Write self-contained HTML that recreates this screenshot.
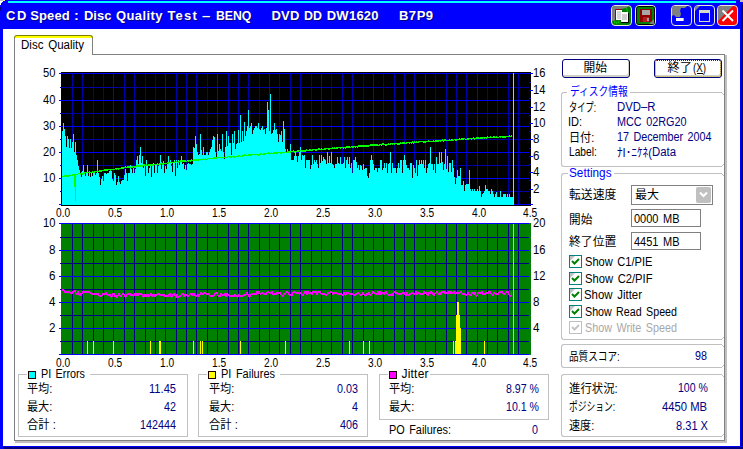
<!DOCTYPE html><html><head><meta charset="utf-8"><title>CD Speed : Disc Quality Test</title><style>
html,body{margin:0;padding:0;background:#fff}
body{width:743px;height:449px;position:relative;overflow:hidden;font-family:"Liberation Sans",sans-serif;font-size:12px}
svg{overflow:visible}
</style></head><body>
<svg style="position:absolute;left:0;top:0" width="743" height="449" shape-rendering="crispEdges"><rect x="61" y="72" width="470" height="134" fill="#000"/><rect x="72" y="73" width="1" height="132" fill="#0000a8"/><rect x="82" y="73" width="1" height="132" fill="#0000a8"/><rect x="93" y="73" width="1" height="132" fill="#0000a8"/><rect x="103" y="73" width="1" height="132" fill="#0000a8"/><rect x="113" y="73" width="1" height="132" fill="#0000ff"/><rect x="124" y="73" width="1" height="132" fill="#0000a8"/><rect x="134" y="73" width="1" height="132" fill="#0000a8"/><rect x="145" y="73" width="1" height="132" fill="#0000a8"/><rect x="155" y="73" width="1" height="132" fill="#0000a8"/><rect x="165" y="73" width="1" height="132" fill="#0000ff"/><rect x="176" y="73" width="1" height="132" fill="#0000a8"/><rect x="186" y="73" width="1" height="132" fill="#0000a8"/><rect x="196" y="73" width="1" height="132" fill="#0000a8"/><rect x="207" y="73" width="1" height="132" fill="#0000a8"/><rect x="217" y="73" width="1" height="132" fill="#0000ff"/><rect x="228" y="73" width="1" height="132" fill="#0000a8"/><rect x="238" y="73" width="1" height="132" fill="#0000a8"/><rect x="248" y="73" width="1" height="132" fill="#0000a8"/><rect x="259" y="73" width="1" height="132" fill="#0000a8"/><rect x="269" y="73" width="1" height="132" fill="#0000ff"/><rect x="279" y="73" width="1" height="132" fill="#0000a8"/><rect x="290" y="73" width="1" height="132" fill="#0000a8"/><rect x="300" y="73" width="1" height="132" fill="#0000a8"/><rect x="311" y="73" width="1" height="132" fill="#0000a8"/><rect x="321" y="73" width="1" height="132" fill="#0000ff"/><rect x="331" y="73" width="1" height="132" fill="#0000a8"/><rect x="342" y="73" width="1" height="132" fill="#0000a8"/><rect x="352" y="73" width="1" height="132" fill="#0000a8"/><rect x="363" y="73" width="1" height="132" fill="#0000a8"/><rect x="373" y="73" width="1" height="132" fill="#0000ff"/><rect x="383" y="73" width="1" height="132" fill="#0000a8"/><rect x="394" y="73" width="1" height="132" fill="#0000a8"/><rect x="404" y="73" width="1" height="132" fill="#0000a8"/><rect x="414" y="73" width="1" height="132" fill="#0000a8"/><rect x="425" y="73" width="1" height="132" fill="#0000ff"/><rect x="435" y="73" width="1" height="132" fill="#0000a8"/><rect x="446" y="73" width="1" height="132" fill="#0000a8"/><rect x="456" y="73" width="1" height="132" fill="#0000a8"/><rect x="466" y="73" width="1" height="132" fill="#0000a8"/><rect x="477" y="73" width="1" height="132" fill="#0000ff"/><rect x="487" y="73" width="1" height="132" fill="#0000a8"/><rect x="497" y="73" width="1" height="132" fill="#0000a8"/><rect x="508" y="73" width="1" height="132" fill="#0000a8"/><rect x="518" y="73" width="1" height="132" fill="#0000a8"/><rect x="59" y="204" width="470" height="1" fill="#0000ff"/><rect x="60" y="191" width="469" height="1" fill="#0000a8"/><rect x="59" y="178" width="470" height="1" fill="#0000ff"/><rect x="60" y="165" width="469" height="1" fill="#0000a8"/><rect x="59" y="152" width="470" height="1" fill="#0000ff"/><rect x="60" y="139" width="469" height="1" fill="#0000a8"/><rect x="59" y="126" width="470" height="1" fill="#0000ff"/><rect x="60" y="113" width="469" height="1" fill="#0000a8"/><rect x="59" y="100" width="470" height="1" fill="#0000ff"/><rect x="60" y="87" width="469" height="1" fill="#0000a8"/><rect x="59" y="73" width="470" height="1" fill="#0000ff"/><rect x="529" y="204" width="4" height="1" fill="#0000ff"/><rect x="529" y="197" width="2" height="1" fill="#0000ff"/><rect x="529" y="189" width="4" height="1" fill="#0000ff"/><rect x="529" y="180" width="2" height="1" fill="#0000ff"/><rect x="529" y="172" width="4" height="1" fill="#0000ff"/><rect x="529" y="164" width="2" height="1" fill="#0000ff"/><rect x="529" y="156" width="4" height="1" fill="#0000ff"/><rect x="529" y="148" width="2" height="1" fill="#0000ff"/><rect x="529" y="139" width="4" height="1" fill="#0000ff"/><rect x="529" y="131" width="2" height="1" fill="#0000ff"/><rect x="529" y="123" width="4" height="1" fill="#0000ff"/><rect x="529" y="115" width="2" height="1" fill="#0000ff"/><rect x="529" y="107" width="4" height="1" fill="#0000ff"/><rect x="529" y="98" width="2" height="1" fill="#0000ff"/><rect x="529" y="90" width="4" height="1" fill="#0000ff"/><rect x="529" y="82" width="2" height="1" fill="#0000ff"/><rect x="529" y="73" width="4" height="1" fill="#0000ff"/><path d="M62 205V131h1V123h1V129h1V136h1V147h1V136h1V139h1V148h1V139h1V148h1V142h1V134h1V152h1V142h1V155h1V160h1V166h1V170h1V173h1V177h1V171h1V165h1V173h1V176h1V173h1V165h1V176h1V173h1V177h1V173h1V176h1V173h1V172h1V175h1V173h1V160h1V173h1V177h1V185h1V179h1V176h1V181h1V173h1V173h1V174h1V173h1V173h1V171h1V169h1V171h1V179h1V181h1V173h1V175h1V185h1V182h1V176h1V182h1V184h1V181h1V180h1V180h1V175h1V169h1V173h1V181h1V173h1V173h1V165h1V169h1V173h1V168h1V173h1V169h1V160h1V156h1V164h1V155h1V147h1V163h1V156h1V168h1V164h1V176h1V160h1V166h1V173h1V168h1V166h1V177h1V166h1V163h1V173h1V164h1V164h1V173h1V166h1V164h1V155h1V169h1V164h1V161h1V173h1V166h1V169h1V164h1V156h1V163h1V160h1V166h1V172h1V162h1V160h1V176h1V160h1V168h1V160h1V165h1V160h1V156h1V164h1V163h1V169h1V165h1V170h1V164h1V163h1V164h1V164h1V165h1V164h1V147h1V148h1V136h1V144h1V152h1V155h1V154h1V134h1V150h1V155h1V147h1V155h1V155h1V152h1V152h1V155h1V152h1V149h1V147h1V140h1V136h1V137h1V152h1V159h1V134h1V151h1V144h1V149h1V151h1V134h1V152h1V159h1V147h1V131h1V146h1V136h1V143h1V143h1V155h1V134h1V143h1V131h1V149h1V144h1V143h1V130h1V143h1V115h1V142h1V131h1V141h1V122h1V136h1V131h1V126h1V110h1V128h1V126h1V123h1V134h1V130h1V128h1V126h1V126h1V128h1V123h1V129h1V130h1V128h1V126h1V130h1V129h1V134h1V128h1V102h1V110h1V131h1V94h1V134h1V133h1V130h1V123h1V130h1V129h1V134h1V142h1V134h1V135h1V131h1V142h1V121h1V129h1V149h1V152h1V149h1V152h1V151h1V144h1V160h1V160h1V160h1V156h1V152h1V156h1V162h1V156h1V152h1V147h1V160h1V155h1V156h1V155h1V168h1V160h1V160h1V160h1V160h1V169h1V165h1V155h1V164h1V160h1V162h1V160h1V164h1V168h1V155h1V163h1V155h1V161h1V157h1V159h1V160h1V164h1V152h1V163h1V156h1V163h1V152h1V164h1V165h1V168h1V164h1V164h1V157h1V163h1V164h1V157h1V164h1V164h1V163h1V157h1V168h1V160h1V157h1V164h1V157h1V168h1V163h1V173h1V160h1V160h1V157h1V162h1V168h1V165h1V170h1V165h1V166h1V170h1V164h1V169h1V168h1V168h1V176h1V178h1V173h1V160h1V155h1V160h1V164h1V170h1V168h1V168h1V172h1V168h1V168h1V160h1V160h1V170h1V168h1V163h1V168h1V163h1V173h1V164h1V163h1V152h1V173h1V163h1V168h1V168h1V168h1V173h1V168h1V163h1V168h1V160h1V160h1V173h1V160h1V155h1V160h1V165h1V168h1V168h1V170h1V163h1V163h1V178h1V165h1V168h1V173h1V160h1V176h1V165h1V160h1V164h1V160h1V164h1V160h1V168h1V160h1V173h1V168h1V164h1V163h1V147h1V164h1V164h1V170h1V164h1V173h1V157h1V164h1V164h1V152h1V163h1V152h1V162h1V170h1V164h1V149h1V169h1V156h1V172h1V163h1V163h1V172h1V160h1V168h1V177h1V184h1V178h1V170h1V176h1V176h1V168h1V185h1V185h1V181h1V191h1V185h1V184h1V184h1V184h1V170h1V189h1V191h1V189h1V191h1V189h1V191h1V191h1V189h1V191h1V186h1V191h1V197h1V194h1V193h1V191h1V185h1V189h1V189h1V191h1V191h1V194h1V189h1V191h1V194h1V197h1V194h1V192h1V197h1V197h1V197h1V191h1V197h1V197h1V194h1V194h1V194h1V197h1V194h1V197h1V194h1V197h1V197h1V197h1V205Z" fill="#00ffff"/><path d="M62 176h1v1h-1zM63 176h1v1h-1zM64 175h1v2h-1zM65 175h1v1h-1zM66 175h1v2h-1zM67 175h1v2h-1zM68 175h1v2h-1zM69 174h1v2h-1zM70 175h1v1h-1zM71 175h1v1h-1zM72 174h1v2h-1zM73 174h1v1h-1zM74 174h1v2h-1zM75 174h1v2h-1zM76 174h1v1h-1zM77 174h1v1h-1zM78 173h1v1h-1zM79 173h1v1h-1zM80 173h1v2h-1zM81 172h1v2h-1zM82 173h1v2h-1zM83 172h1v2h-1zM84 172h1v2h-1zM85 172h1v1h-1zM86 172h1v1h-1zM87 172h1v1h-1zM88 172h1v1h-1zM89 171h1v2h-1zM90 172h1v1h-1zM91 172h1v1h-1zM92 171h1v2h-1zM93 172h1v1h-1zM94 171h1v2h-1zM95 171h1v1h-1zM96 171h1v1h-1zM97 170h1v2h-1zM98 171h1v1h-1zM99 170h1v2h-1zM100 170h1v2h-1zM101 170h1v2h-1zM102 170h1v1h-1zM103 170h1v1h-1zM104 169h1v2h-1zM105 169h1v2h-1zM106 169h1v2h-1zM107 169h1v2h-1zM108 169h1v1h-1zM109 169h1v1h-1zM110 169h1v2h-1zM111 169h1v1h-1zM112 169h1v1h-1zM113 169h1v1h-1zM114 169h1v1h-1zM115 168h1v1h-1zM116 168h1v2h-1zM117 168h1v1h-1zM118 168h1v2h-1zM119 168h1v1h-1zM120 168h1v1h-1zM121 167h1v2h-1zM122 167h1v2h-1zM123 167h1v2h-1zM124 167h1v1h-1zM125 166h1v2h-1zM126 167h1v1h-1zM127 166h1v2h-1zM128 166h1v2h-1zM129 166h1v2h-1zM130 167h1v1h-1zM131 166h1v2h-1zM132 166h1v2h-1zM133 166h1v1h-1zM134 166h1v2h-1zM135 166h1v2h-1zM136 165h1v2h-1zM137 165h1v2h-1zM138 165h1v2h-1zM139 165h1v2h-1zM140 165h1v2h-1zM141 165h1v1h-1zM142 165h1v2h-1zM143 164h1v2h-1zM144 164h1v2h-1zM145 165h1v1h-1zM146 164h1v2h-1zM147 165h1v1h-1zM148 164h1v2h-1zM149 164h1v2h-1zM150 164h1v2h-1zM151 164h1v2h-1zM152 164h1v2h-1zM153 164h1v2h-1zM154 164h1v1h-1zM155 164h1v1h-1zM156 164h1v1h-1zM157 163h1v2h-1zM158 164h1v1h-1zM159 163h1v1h-1zM160 163h1v2h-1zM161 162h1v2h-1zM162 163h1v2h-1zM163 163h1v2h-1zM164 163h1v1h-1zM165 163h1v1h-1zM166 163h1v1h-1zM167 162h1v1h-1zM168 162h1v2h-1zM169 162h1v1h-1zM170 162h1v1h-1zM171 162h1v2h-1zM172 162h1v1h-1zM173 162h1v1h-1zM174 161h1v2h-1zM175 162h1v1h-1zM176 161h1v1h-1zM177 162h1v1h-1zM178 161h1v2h-1zM179 161h1v1h-1zM180 160h1v2h-1zM181 161h1v1h-1zM182 160h1v2h-1zM183 160h1v2h-1zM184 160h1v2h-1zM185 160h1v2h-1zM186 161h1v1h-1zM187 160h1v1h-1zM188 160h1v2h-1zM189 160h1v1h-1zM190 160h1v2h-1zM191 159h1v2h-1zM192 160h1v1h-1zM193 159h1v2h-1zM194 159h1v2h-1zM195 160h1v1h-1zM196 159h1v2h-1zM197 160h1v1h-1zM198 159h1v2h-1zM199 159h1v1h-1zM200 159h1v1h-1zM201 159h1v2h-1zM202 159h1v1h-1zM203 158h1v2h-1zM204 159h1v1h-1zM205 158h1v2h-1zM206 159h1v1h-1zM207 158h1v2h-1zM208 158h1v1h-1zM209 158h1v1h-1zM210 158h1v1h-1zM211 158h1v1h-1zM212 158h1v1h-1zM213 157h1v2h-1zM214 157h1v2h-1zM215 157h1v2h-1zM216 157h1v2h-1zM217 157h1v1h-1zM218 157h1v1h-1zM219 157h1v1h-1zM220 157h1v1h-1zM221 157h1v2h-1zM222 157h1v1h-1zM223 157h1v2h-1zM224 157h1v1h-1zM225 156h1v2h-1zM226 157h1v1h-1zM227 156h1v2h-1zM228 156h1v1h-1zM229 156h1v2h-1zM230 156h1v2h-1zM231 156h1v2h-1zM232 156h1v1h-1zM233 156h1v2h-1zM234 156h1v2h-1zM235 156h1v1h-1zM236 156h1v1h-1zM237 156h1v1h-1zM238 155h1v2h-1zM239 155h1v1h-1zM240 156h1v1h-1zM241 155h1v1h-1zM242 155h1v2h-1zM243 155h1v1h-1zM244 154h1v2h-1zM245 155h1v1h-1zM246 155h1v1h-1zM247 155h1v1h-1zM248 154h1v2h-1zM249 154h1v2h-1zM250 154h1v2h-1zM251 154h1v2h-1zM252 154h1v1h-1zM253 154h1v1h-1zM254 154h1v1h-1zM255 154h1v1h-1zM256 154h1v1h-1zM257 154h1v1h-1zM258 154h1v2h-1zM259 154h1v1h-1zM260 153h1v2h-1zM261 153h1v1h-1zM262 154h1v1h-1zM263 153h1v2h-1zM264 153h1v2h-1zM265 153h1v1h-1zM266 153h1v1h-1zM267 153h1v1h-1zM268 152h1v2h-1zM269 153h1v2h-1zM270 153h1v1h-1zM271 152h1v2h-1zM272 153h1v1h-1zM273 152h1v2h-1zM274 152h1v2h-1zM275 152h1v1h-1zM276 152h1v2h-1zM277 152h1v2h-1zM278 152h1v1h-1zM279 152h1v1h-1zM280 152h1v2h-1zM281 152h1v2h-1zM282 152h1v1h-1zM283 152h1v1h-1zM284 152h1v1h-1zM285 151h1v1h-1zM286 152h1v1h-1zM287 151h1v2h-1zM288 151h1v2h-1zM289 151h1v1h-1zM290 151h1v2h-1zM291 151h1v1h-1zM292 151h1v1h-1zM293 150h1v2h-1zM294 151h1v2h-1zM295 151h1v1h-1zM296 151h1v1h-1zM297 150h1v2h-1zM298 150h1v2h-1zM299 150h1v1h-1zM300 150h1v1h-1zM301 150h1v2h-1zM302 150h1v2h-1zM303 150h1v2h-1zM304 150h1v2h-1zM305 150h1v2h-1zM306 149h1v2h-1zM307 150h1v1h-1zM308 150h1v1h-1zM309 149h1v2h-1zM310 149h1v2h-1zM311 150h1v1h-1zM312 149h1v2h-1zM313 149h1v1h-1zM314 149h1v1h-1zM315 149h1v2h-1zM316 149h1v2h-1zM317 149h1v1h-1zM318 148h1v2h-1zM319 148h1v2h-1zM320 149h1v1h-1zM321 148h1v2h-1zM322 149h1v1h-1zM323 149h1v1h-1zM324 148h1v2h-1zM325 148h1v2h-1zM326 148h1v1h-1zM327 148h1v1h-1zM328 148h1v2h-1zM329 148h1v2h-1zM330 148h1v1h-1zM331 148h1v1h-1zM332 147h1v2h-1zM333 148h1v1h-1zM334 147h1v2h-1zM335 148h1v1h-1zM336 147h1v2h-1zM337 147h1v2h-1zM338 147h1v1h-1zM339 147h1v1h-1zM340 147h1v2h-1zM341 147h1v1h-1zM342 147h1v1h-1zM343 147h1v2h-1zM344 147h1v1h-1zM345 147h1v2h-1zM346 146h1v2h-1zM347 146h1v2h-1zM348 146h1v2h-1zM349 146h1v2h-1zM350 147h1v1h-1zM351 146h1v1h-1zM352 146h1v2h-1zM353 146h1v2h-1zM354 146h1v1h-1zM355 146h1v2h-1zM356 146h1v1h-1zM357 146h1v2h-1zM358 145h1v2h-1zM359 145h1v2h-1zM360 145h1v2h-1zM361 145h1v2h-1zM362 145h1v2h-1zM363 145h1v2h-1zM364 145h1v2h-1zM365 145h1v2h-1zM366 145h1v2h-1zM367 145h1v2h-1zM368 145h1v2h-1zM369 145h1v1h-1zM370 144h1v2h-1zM371 144h1v2h-1zM372 144h1v2h-1zM373 144h1v2h-1zM374 144h1v2h-1zM375 144h1v2h-1zM376 144h1v2h-1zM377 144h1v2h-1zM378 145h1v1h-1zM379 144h1v2h-1zM380 144h1v1h-1zM381 144h1v2h-1zM382 143h1v2h-1zM383 143h1v2h-1zM384 144h1v1h-1zM385 144h1v2h-1zM386 144h1v2h-1zM387 144h1v1h-1zM388 143h1v2h-1zM389 144h1v1h-1zM390 143h1v2h-1zM391 143h1v1h-1zM392 143h1v2h-1zM393 143h1v1h-1zM394 143h1v2h-1zM395 143h1v1h-1zM396 143h1v1h-1zM397 143h1v2h-1zM398 143h1v2h-1zM399 143h1v2h-1zM400 142h1v2h-1zM401 143h1v1h-1zM402 142h1v2h-1zM403 142h1v2h-1zM404 142h1v2h-1zM405 143h1v1h-1zM406 142h1v2h-1zM407 142h1v1h-1zM408 142h1v1h-1zM409 142h1v2h-1zM410 142h1v1h-1zM411 142h1v2h-1zM412 141h1v2h-1zM413 142h1v2h-1zM414 141h1v2h-1zM415 142h1v1h-1zM416 141h1v2h-1zM417 142h1v1h-1zM418 141h1v2h-1zM419 141h1v1h-1zM420 141h1v1h-1zM421 141h1v1h-1zM422 141h1v1h-1zM423 141h1v2h-1zM424 141h1v2h-1zM425 141h1v2h-1zM426 141h1v1h-1zM427 141h1v1h-1zM428 140h1v2h-1zM429 141h1v1h-1zM430 141h1v1h-1zM431 141h1v1h-1zM432 141h1v1h-1zM433 140h1v2h-1zM434 141h1v1h-1zM435 140h1v2h-1zM436 140h1v2h-1zM437 140h1v2h-1zM438 140h1v2h-1zM439 140h1v1h-1zM440 140h1v2h-1zM441 140h1v1h-1zM442 139h1v2h-1zM443 140h1v2h-1zM444 139h1v2h-1zM445 139h1v2h-1zM446 140h1v1h-1zM447 140h1v1h-1zM448 140h1v1h-1zM449 139h1v2h-1zM450 140h1v1h-1zM451 139h1v2h-1zM452 139h1v2h-1zM453 140h1v1h-1zM454 139h1v1h-1zM455 139h1v2h-1zM456 139h1v2h-1zM457 139h1v1h-1zM458 139h1v1h-1zM459 138h1v2h-1zM460 139h1v1h-1zM461 138h1v2h-1zM462 138h1v2h-1zM463 138h1v2h-1zM464 138h1v1h-1zM465 139h1v1h-1zM466 139h1v1h-1zM467 138h1v2h-1zM468 138h1v2h-1zM469 138h1v1h-1zM470 138h1v1h-1zM471 138h1v2h-1zM472 138h1v1h-1zM473 137h1v2h-1zM474 138h1v2h-1zM475 138h1v1h-1zM476 137h1v2h-1zM477 137h1v2h-1zM478 137h1v2h-1zM479 138h1v1h-1zM480 137h1v2h-1zM481 137h1v2h-1zM482 137h1v2h-1zM483 137h1v1h-1zM484 137h1v2h-1zM485 137h1v1h-1zM486 137h1v2h-1zM487 136h1v2h-1zM488 137h1v1h-1zM489 137h1v1h-1zM490 136h1v2h-1zM491 137h1v1h-1zM492 137h1v1h-1zM493 136h1v2h-1zM494 136h1v2h-1zM495 137h1v1h-1zM496 136h1v2h-1zM497 137h1v1h-1zM498 137h1v1h-1zM499 136h1v1h-1zM500 136h1v2h-1zM501 136h1v1h-1zM502 136h1v2h-1zM503 136h1v2h-1zM504 136h1v2h-1zM505 136h1v2h-1zM506 136h1v1h-1zM507 136h1v1h-1zM508 136h1v1h-1zM509 135h1v2h-1zM510 136h1v1h-1zM511 135h1v2h-1z" fill="#00ff00"/><rect x="74" y="174" width="2" height="13" fill="#00ff00"/><rect x="75" y="187" width="1" height="14" fill="#00ff00"/><rect x="513" y="73" width="1" height="132" fill="#c0c0c0"/><rect x="61" y="223" width="470" height="132" fill="#008000"/><rect x="72" y="223" width="1" height="132" fill="#000080"/><rect x="82" y="223" width="1" height="132" fill="#000080"/><rect x="93" y="223" width="1" height="132" fill="#000080"/><rect x="103" y="223" width="1" height="132" fill="#000080"/><rect x="113" y="223" width="1" height="132" fill="#0000ff"/><rect x="124" y="223" width="1" height="132" fill="#000080"/><rect x="134" y="223" width="1" height="132" fill="#000080"/><rect x="145" y="223" width="1" height="132" fill="#000080"/><rect x="155" y="223" width="1" height="132" fill="#000080"/><rect x="165" y="223" width="1" height="132" fill="#0000ff"/><rect x="176" y="223" width="1" height="132" fill="#000080"/><rect x="186" y="223" width="1" height="132" fill="#000080"/><rect x="196" y="223" width="1" height="132" fill="#000080"/><rect x="207" y="223" width="1" height="132" fill="#000080"/><rect x="217" y="223" width="1" height="132" fill="#0000ff"/><rect x="228" y="223" width="1" height="132" fill="#000080"/><rect x="238" y="223" width="1" height="132" fill="#000080"/><rect x="248" y="223" width="1" height="132" fill="#000080"/><rect x="259" y="223" width="1" height="132" fill="#000080"/><rect x="269" y="223" width="1" height="132" fill="#0000ff"/><rect x="279" y="223" width="1" height="132" fill="#000080"/><rect x="290" y="223" width="1" height="132" fill="#000080"/><rect x="300" y="223" width="1" height="132" fill="#000080"/><rect x="311" y="223" width="1" height="132" fill="#000080"/><rect x="321" y="223" width="1" height="132" fill="#0000ff"/><rect x="331" y="223" width="1" height="132" fill="#000080"/><rect x="342" y="223" width="1" height="132" fill="#000080"/><rect x="352" y="223" width="1" height="132" fill="#000080"/><rect x="363" y="223" width="1" height="132" fill="#000080"/><rect x="373" y="223" width="1" height="132" fill="#0000ff"/><rect x="383" y="223" width="1" height="132" fill="#000080"/><rect x="394" y="223" width="1" height="132" fill="#000080"/><rect x="404" y="223" width="1" height="132" fill="#000080"/><rect x="414" y="223" width="1" height="132" fill="#000080"/><rect x="425" y="223" width="1" height="132" fill="#0000ff"/><rect x="435" y="223" width="1" height="132" fill="#000080"/><rect x="446" y="223" width="1" height="132" fill="#000080"/><rect x="456" y="223" width="1" height="132" fill="#000080"/><rect x="466" y="223" width="1" height="132" fill="#000080"/><rect x="477" y="223" width="1" height="132" fill="#0000ff"/><rect x="487" y="223" width="1" height="132" fill="#000080"/><rect x="497" y="223" width="1" height="132" fill="#000080"/><rect x="508" y="223" width="1" height="132" fill="#000080"/><rect x="518" y="223" width="1" height="132" fill="#000080"/><rect x="59" y="354" width="470" height="1" fill="#0000ff"/><rect x="60" y="341" width="469" height="1" fill="#000080"/><rect x="59" y="328" width="470" height="1" fill="#0000ff"/><rect x="60" y="315" width="469" height="1" fill="#000080"/><rect x="59" y="302" width="470" height="1" fill="#0000ff"/><rect x="60" y="289" width="469" height="1" fill="#000080"/><rect x="59" y="276" width="470" height="1" fill="#0000ff"/><rect x="60" y="263" width="469" height="1" fill="#000080"/><rect x="59" y="250" width="470" height="1" fill="#0000ff"/><rect x="60" y="237" width="469" height="1" fill="#000080"/><rect x="59" y="223" width="470" height="1" fill="#0000ff"/><rect x="87" y="341" width="1" height="13" fill="#ffff00"/><rect x="93" y="341" width="1" height="13" fill="#ffff00"/><rect x="113" y="341" width="1" height="13" fill="#ffff00"/><rect x="150" y="341" width="1" height="13" fill="#ffff00"/><rect x="159" y="341" width="1" height="13" fill="#ffff00"/><rect x="160" y="341" width="1" height="13" fill="#ffff00"/><rect x="193" y="341" width="1" height="13" fill="#ffff00"/><rect x="200" y="341" width="1" height="13" fill="#ffff00"/><rect x="202" y="341" width="1" height="13" fill="#ffff00"/><rect x="240" y="341" width="1" height="13" fill="#ffff00"/><rect x="285" y="341" width="1" height="13" fill="#ffff00"/><rect x="349" y="341" width="1" height="13" fill="#ffff00"/><rect x="363" y="341" width="1" height="13" fill="#ffff00"/><rect x="369" y="341" width="1" height="13" fill="#ffff00"/><rect x="453" y="341" width="1" height="13" fill="#ffff00"/><rect x="455" y="341" width="1" height="13" fill="#ffff00"/><rect x="484" y="341" width="1" height="13" fill="#ffff00"/><path d="M455 354V341h1V315h1V302h2V315h1V328h1V354Z" fill="#ffff00"/><path d="M62 289h1v2h-1zM63 289h1v2h-1zM64 290h1v3h-1zM65 291h1v2h-1zM66 291h1v2h-1zM67 292h1v2h-1zM68 291h1v2h-1zM69 291h1v2h-1zM70 292h1v2h-1zM71 292h1v2h-1zM72 291h1v3h-1zM73 291h1v2h-1zM74 290h1v2h-1zM75 290h1v4h-1zM76 293h1v2h-1zM77 291h1v3h-1zM78 291h1v4h-1zM79 294h1v2h-1zM80 293h1v3h-1zM81 293h1v2h-1zM82 291h1v3h-1zM83 291h1v2h-1zM84 291h1v2h-1zM85 291h1v2h-1zM86 291h1v2h-1zM87 291h1v2h-1zM88 291h1v2h-1zM89 291h1v2h-1zM90 292h1v2h-1zM91 293h1v2h-1zM92 293h1v2h-1zM93 293h1v2h-1zM94 293h1v2h-1zM95 293h1v2h-1zM96 293h1v2h-1zM97 293h1v2h-1zM98 293h1v3h-1zM99 295h1v2h-1zM100 295h1v2h-1zM101 295h1v2h-1zM102 293h1v3h-1zM103 293h1v2h-1zM104 293h1v2h-1zM105 292h1v2h-1zM106 292h1v3h-1zM107 294h1v2h-1zM108 294h1v2h-1zM109 294h1v2h-1zM110 294h1v3h-1zM111 296h1v2h-1zM112 293h1v4h-1zM113 293h1v2h-1zM114 293h1v4h-1zM115 295h1v2h-1zM116 295h1v3h-1zM117 295h1v3h-1zM118 293h1v3h-1zM119 293h1v3h-1zM120 295h1v2h-1zM121 294h1v3h-1zM122 293h1v2h-1zM123 293h1v2h-1zM124 294h1v3h-1zM125 296h1v2h-1zM126 294h1v3h-1zM127 293h1v2h-1zM128 293h1v2h-1zM129 293h1v2h-1zM130 293h1v3h-1zM131 294h1v2h-1zM132 294h1v2h-1zM133 295h1v2h-1zM134 293h1v3h-1zM135 293h1v3h-1zM136 293h1v3h-1zM137 293h1v3h-1zM138 293h1v3h-1zM139 293h1v2h-1zM140 293h1v2h-1zM141 293h1v2h-1zM142 294h1v3h-1zM143 296h1v2h-1zM144 294h1v3h-1zM145 294h1v3h-1zM146 294h1v3h-1zM147 294h1v2h-1zM148 294h1v3h-1zM149 295h1v2h-1zM150 293h1v3h-1zM151 293h1v4h-1zM152 294h1v3h-1zM153 294h1v2h-1zM154 294h1v3h-1zM155 294h1v3h-1zM156 294h1v2h-1zM157 293h1v2h-1zM158 293h1v2h-1zM159 293h1v3h-1zM160 294h1v2h-1zM161 294h1v2h-1zM162 294h1v2h-1zM163 294h1v2h-1zM164 294h1v3h-1zM165 295h1v2h-1zM166 295h1v2h-1zM167 295h1v2h-1zM168 294h1v3h-1zM169 293h1v2h-1zM170 293h1v4h-1zM171 296h1v2h-1zM172 294h1v3h-1zM173 293h1v2h-1zM174 293h1v3h-1zM175 295h1v3h-1zM176 294h1v4h-1zM177 294h1v3h-1zM178 296h1v2h-1zM179 295h1v2h-1zM180 295h1v2h-1zM181 293h1v3h-1zM182 293h1v2h-1zM183 293h1v4h-1zM184 294h1v3h-1zM185 294h1v2h-1zM186 294h1v2h-1zM187 294h1v3h-1zM188 295h1v2h-1zM189 294h1v2h-1zM190 293h1v2h-1zM191 293h1v3h-1zM192 293h1v3h-1zM193 293h1v2h-1zM194 293h1v3h-1zM195 295h1v2h-1zM196 295h1v2h-1zM197 294h1v2h-1zM198 294h1v3h-1zM199 294h1v3h-1zM200 292h1v3h-1zM201 292h1v2h-1zM202 293h1v2h-1zM203 292h1v3h-1zM204 292h1v2h-1zM205 292h1v2h-1zM206 293h1v2h-1zM207 293h1v2h-1zM208 293h1v2h-1zM209 293h1v3h-1zM210 295h1v2h-1zM211 295h1v2h-1zM212 295h1v2h-1zM213 295h1v2h-1zM214 293h1v3h-1zM215 292h1v2h-1zM216 292h1v2h-1zM217 292h1v4h-1zM218 295h1v2h-1zM219 295h1v2h-1zM220 293h1v4h-1zM221 293h1v2h-1zM222 294h1v2h-1zM223 294h1v2h-1zM224 293h1v3h-1zM225 293h1v4h-1zM226 293h1v4h-1zM227 293h1v2h-1zM228 294h1v2h-1zM229 295h1v2h-1zM230 295h1v2h-1zM231 295h1v2h-1zM232 295h1v2h-1zM233 295h1v2h-1zM234 294h1v3h-1zM235 294h1v2h-1zM236 295h1v2h-1zM237 296h1v2h-1zM238 294h1v3h-1zM239 294h1v2h-1zM240 295h1v2h-1zM241 295h1v2h-1zM242 295h1v2h-1zM243 294h1v2h-1zM244 294h1v2h-1zM245 294h1v2h-1zM246 292h1v3h-1zM247 292h1v3h-1zM248 294h1v3h-1zM249 296h1v2h-1zM250 294h1v3h-1zM251 293h1v2h-1zM252 293h1v2h-1zM253 293h1v2h-1zM254 293h1v2h-1zM255 293h1v2h-1zM256 291h1v4h-1zM257 291h1v3h-1zM258 291h1v3h-1zM259 291h1v3h-1zM260 293h1v2h-1zM261 292h1v2h-1zM262 292h1v2h-1zM263 293h1v2h-1zM264 293h1v2h-1zM265 293h1v2h-1zM266 292h1v3h-1zM267 291h1v2h-1zM268 291h1v2h-1zM269 292h1v2h-1zM270 292h1v2h-1zM271 291h1v2h-1zM272 291h1v4h-1zM273 294h1v2h-1zM274 293h1v2h-1zM275 293h1v2h-1zM276 292h1v3h-1zM277 292h1v2h-1zM278 292h1v2h-1zM279 292h1v2h-1zM280 292h1v3h-1zM281 294h1v2h-1zM282 295h1v2h-1zM283 293h1v3h-1zM284 293h1v2h-1zM285 292h1v2h-1zM286 291h1v2h-1zM287 291h1v2h-1zM288 292h1v3h-1zM289 294h1v2h-1zM290 294h1v2h-1zM291 294h1v2h-1zM292 292h1v4h-1zM293 291h1v2h-1zM294 291h1v2h-1zM295 292h1v2h-1zM296 292h1v2h-1zM297 292h1v2h-1zM298 292h1v2h-1zM299 293h1v2h-1zM300 292h1v2h-1zM301 292h1v3h-1zM302 294h1v2h-1zM303 293h1v3h-1zM304 291h1v3h-1zM305 291h1v2h-1zM306 291h1v4h-1zM307 291h1v4h-1zM308 291h1v3h-1zM309 293h1v2h-1zM310 292h1v2h-1zM311 292h1v3h-1zM312 291h1v4h-1zM313 291h1v2h-1zM314 291h1v2h-1zM315 291h1v2h-1zM316 291h1v4h-1zM317 292h1v3h-1zM318 291h1v2h-1zM319 291h1v2h-1zM320 291h1v3h-1zM321 293h1v2h-1zM322 293h1v2h-1zM323 293h1v2h-1zM324 293h1v2h-1zM325 294h1v2h-1zM326 294h1v2h-1zM327 292h1v3h-1zM328 292h1v2h-1zM329 292h1v2h-1zM330 291h1v2h-1zM331 291h1v2h-1zM332 292h1v3h-1zM333 292h1v3h-1zM334 292h1v2h-1zM335 292h1v2h-1zM336 292h1v2h-1zM337 293h1v2h-1zM338 293h1v2h-1zM339 293h1v2h-1zM340 293h1v2h-1zM341 293h1v2h-1zM342 294h1v2h-1zM343 292h1v4h-1zM344 292h1v3h-1zM345 294h1v2h-1zM346 292h1v3h-1zM347 292h1v2h-1zM348 292h1v2h-1zM349 293h1v2h-1zM350 293h1v2h-1zM351 293h1v2h-1zM352 293h1v2h-1zM353 294h1v2h-1zM354 294h1v2h-1zM355 293h1v3h-1zM356 293h1v2h-1zM357 292h1v2h-1zM358 292h1v2h-1zM359 293h1v2h-1zM360 294h1v2h-1zM361 294h1v2h-1zM362 292h1v3h-1zM363 292h1v3h-1zM364 294h1v2h-1zM365 295h1v2h-1zM366 293h1v3h-1zM367 293h1v2h-1zM368 292h1v3h-1zM369 292h1v3h-1zM370 294h1v2h-1zM371 293h1v2h-1zM372 291h1v3h-1zM373 291h1v2h-1zM374 292h1v2h-1zM375 293h1v2h-1zM376 293h1v2h-1zM377 291h1v3h-1zM378 291h1v4h-1zM379 291h1v4h-1zM380 291h1v4h-1zM381 292h1v3h-1zM382 292h1v2h-1zM383 292h1v3h-1zM384 292h1v3h-1zM385 291h1v2h-1zM386 291h1v3h-1zM387 293h1v2h-1zM388 294h1v2h-1zM389 294h1v2h-1zM390 294h1v2h-1zM391 293h1v3h-1zM392 293h1v3h-1zM393 292h1v4h-1zM394 291h1v2h-1zM395 291h1v3h-1zM396 292h1v2h-1zM397 292h1v3h-1zM398 293h1v2h-1zM399 293h1v2h-1zM400 293h1v2h-1zM401 293h1v2h-1zM402 292h1v2h-1zM403 292h1v2h-1zM404 292h1v3h-1zM405 294h1v2h-1zM406 292h1v4h-1zM407 292h1v3h-1zM408 294h1v2h-1zM409 293h1v3h-1zM410 293h1v2h-1zM411 292h1v2h-1zM412 292h1v2h-1zM413 293h1v2h-1zM414 293h1v2h-1zM415 291h1v3h-1zM416 291h1v4h-1zM417 293h1v2h-1zM418 292h1v2h-1zM419 292h1v3h-1zM420 293h1v2h-1zM421 293h1v2h-1zM422 293h1v2h-1zM423 291h1v4h-1zM424 291h1v3h-1zM425 292h1v2h-1zM426 292h1v3h-1zM427 294h1v2h-1zM428 292h1v4h-1zM429 292h1v2h-1zM430 291h1v3h-1zM431 291h1v2h-1zM432 292h1v3h-1zM433 294h1v2h-1zM434 293h1v3h-1zM435 292h1v2h-1zM436 291h1v2h-1zM437 291h1v3h-1zM438 293h1v2h-1zM439 292h1v3h-1zM440 292h1v3h-1zM441 291h1v4h-1zM442 291h1v2h-1zM443 291h1v2h-1zM444 291h1v3h-1zM445 292h1v2h-1zM446 292h1v2h-1zM447 292h1v2h-1zM448 291h1v3h-1zM449 291h1v3h-1zM450 291h1v3h-1zM451 291h1v3h-1zM452 292h1v2h-1zM453 291h1v2h-1zM454 291h1v3h-1zM455 293h1v2h-1zM456 292h1v2h-1zM457 292h1v2h-1zM458 292h1v2h-1zM459 292h1v2h-1zM460 291h1v2h-1zM461 291h1v3h-1zM462 293h1v2h-1zM463 293h1v2h-1zM464 293h1v2h-1zM465 294h1v2h-1zM466 294h1v2h-1zM467 292h1v3h-1zM468 292h1v3h-1zM469 294h1v2h-1zM470 294h1v2h-1zM471 292h1v4h-1zM472 292h1v2h-1zM473 292h1v3h-1zM474 292h1v3h-1zM475 292h1v4h-1zM476 295h1v2h-1zM477 292h1v4h-1zM478 292h1v2h-1zM479 292h1v2h-1zM480 292h1v2h-1zM481 291h1v2h-1zM482 291h1v4h-1zM483 293h1v2h-1zM484 293h1v2h-1zM485 292h1v3h-1zM486 292h1v2h-1zM487 292h1v2h-1zM488 291h1v3h-1zM489 291h1v2h-1zM490 291h1v3h-1zM491 293h1v2h-1zM492 294h1v2h-1zM493 292h1v4h-1zM494 292h1v2h-1zM495 293h1v2h-1zM496 293h1v2h-1zM497 293h1v2h-1zM498 292h1v3h-1zM499 291h1v2h-1zM500 291h1v2h-1zM501 291h1v2h-1zM502 291h1v3h-1zM503 293h1v2h-1zM504 293h1v2h-1zM505 292h1v2h-1zM506 291h1v2h-1zM507 291h1v2h-1zM508 291h1v4h-1zM509 294h1v2h-1zM510 295h1v2h-1zM511 292h1v4h-1z" fill="#ff00ff"/><rect x="513" y="224" width="1" height="130" fill="#c0c0c0"/></svg>
<div style="position:absolute;left:0px;top:0px;width:743px;height:29px;background:#0000ff"></div>
<div style="position:absolute;left:8px;top:1px;width:728px;height:2px;background:#00ffff"></div>
<div style="position:absolute;left:0px;top:0px;width:3px;height:1px;background:#c0c0c0"></div>
<div style="position:absolute;left:3px;top:0px;width:2px;height:1px;background:#f0e8a0"></div>
<div style="position:absolute;left:0px;top:1px;width:3px;height:1px;background:#fff"></div>
<div style="position:absolute;left:0px;top:2px;width:2px;height:1px;background:#fff"></div>
<div style="position:absolute;left:0px;top:3px;width:1px;height:2px;background:#fff"></div>
<div style="position:absolute;left:0px;top:7px;width:1px;height:4px;background:#000080"></div>
<div style="position:absolute;left:740px;top:0px;width:3px;height:2px;background:#c0c0c0"></div>
<div style="position:absolute;left:0px;top:29px;width:3px;height:420px;background:#0000ff"></div>
<div style="position:absolute;left:740px;top:29px;width:1px;height:420px;background:#0000ff"></div>
<div style="position:absolute;left:741px;top:4px;width:2px;height:445px;background:#000080"></div>
<div style="position:absolute;left:0px;top:446px;width:743px;height:1px;background:#0000ff"></div>
<div style="position:absolute;left:3px;top:447px;width:740px;height:2px;background:#000080"></div>
<div style="position:absolute;top:8.97px;font-size:13px;line-height:13.00px;color:#fff;white-space:pre;font-weight:bold;letter-spacing:1.593px;left:5.92px;text-shadow:1px 1px 0 #000080;">CD</div>
<div style="position:absolute;top:8.97px;font-size:13px;line-height:13.00px;color:#fff;white-space:pre;font-weight:bold;letter-spacing:0.115px;left:30.21px;text-shadow:1px 1px 0 #000080;">Speed</div>
<div style="position:absolute;top:8.97px;font-size:13px;line-height:13.00px;color:#fff;white-space:pre;font-weight:bold;transform:scaleX(1.1081);transform-origin:0 0;left:73.85px;text-shadow:1px 1px 0 #000080;">:</div>
<div style="position:absolute;top:8.97px;font-size:13px;line-height:13.00px;color:#fff;white-space:pre;font-weight:bold;transform:scaleX(0.9966);transform-origin:0 0;left:83.72px;text-shadow:1px 1px 0 #000080;">Disc</div>
<div style="position:absolute;top:8.97px;font-size:13px;line-height:13.00px;color:#fff;white-space:pre;font-weight:bold;letter-spacing:0.435px;left:115.92px;text-shadow:1px 1px 0 #000080;">Quality</div>
<div style="position:absolute;top:8.97px;font-size:13px;line-height:13.00px;color:#fff;white-space:pre;font-weight:bold;letter-spacing:1.236px;left:167.41px;text-shadow:1px 1px 0 #000080;">Test</div>
<div style="position:absolute;top:8.97px;font-size:13px;line-height:13.00px;color:#fff;white-space:pre;font-weight:bold;transform:scaleX(1.1553);transform-origin:0 0;left:202.12px;text-shadow:1px 1px 0 #000080;">–</div>
<div style="position:absolute;top:8.97px;font-size:13px;line-height:13.00px;color:#fff;white-space:pre;font-weight:bold;transform:scaleX(0.9426);transform-origin:0 0;left:215.95px;text-shadow:1px 1px 0 #000080;">BENQ</div>
<div style="position:absolute;top:8.97px;font-size:13px;line-height:13.00px;color:#fff;white-space:pre;font-weight:bold;letter-spacing:0.211px;left:271.52px;text-shadow:1px 1px 0 #000080;">DVD</div>
<div style="position:absolute;top:8.97px;font-size:13px;line-height:13.00px;color:#fff;white-space:pre;font-weight:bold;transform:scaleX(0.9542);transform-origin:0 0;left:303.74px;text-shadow:1px 1px 0 #000080;">DD</div>
<div style="position:absolute;top:8.97px;font-size:13px;line-height:13.00px;color:#fff;white-space:pre;font-weight:bold;letter-spacing:0.259px;left:326.72px;text-shadow:1px 1px 0 #000080;">DW1620</div>
<div style="position:absolute;top:8.97px;font-size:13px;line-height:13.00px;color:#fff;white-space:pre;font-weight:bold;letter-spacing:0.551px;left:398.92px;text-shadow:1px 1px 0 #000080;">B7P9</div>
<div style="position:absolute;left:611px;top:5px;width:19px;height:19px;border:1px solid #e8e8d8;border-radius:4px;background:#008000;overflow:hidden"><svg style="position:absolute;left:0;top:0" width="19" height="19"><path d="M0 0H17L14 2L9 3L5 6L4 12L2 15H0Z" fill="#808080"/><rect x="4" y="4" width="6" height="10" fill="#fff"/><path d="M3.5 14V3.5H10" fill="none" stroke="#a00000"/><path d="M5 6h4M5 8h4M5 10h4M5 12h4" stroke="#b0b0b0"/><rect x="9" y="6" width="7" height="10" fill="#fff"/><path d="M16.5 7V16.5H9" fill="none" stroke="#000"/><path d="M10 9h5M10 11h5M10 13h5" stroke="#a0a0a0"/><path d="M2 16h1M4 17h1M6 16h1M14 3h1M15 5h1M1 13h1" stroke="#00ff00"/></svg></div>
<div style="position:absolute;left:635px;top:5px;width:19px;height:19px;border:1px solid #e8e8d8;border-radius:4px;background:#008000;overflow:hidden"><svg style="position:absolute;left:0;top:0" width="19" height="19"><rect x="0.5" y="0.5" width="18" height="18" rx="2" fill="none" stroke="#000"/><rect x="4" y="3" width="12" height="13" fill="#900000"/><rect x="6" y="4" width="8" height="5" fill="#a8a8a8"/><rect x="7" y="11" width="6" height="5" fill="#b02020"/><rect x="11" y="12" width="2" height="3" fill="#a0a0a0"/><path d="M13 18l5-5v5z" fill="#808080"/></svg></div>
<div style="position:absolute;left:671px;top:5px;width:19px;height:19px;border:1px solid #e8e8d8;border-radius:4px;background:#0000ff;overflow:hidden"><svg style="position:absolute;left:0;top:0" width="19" height="19"><path d="M0 0H15L13 2H9L8 5L9 8L8 11H4L2 9L0 10Z" fill="#808080"/><rect x="4" y="12" width="7" height="3" fill="#fff"/><rect x="11" y="12" width="1" height="3" fill="#00ffff"/></svg></div>
<div style="position:absolute;left:694px;top:5px;width:19px;height:19px;border:1px solid #e8e8d8;border-radius:4px;background:#0000ff;overflow:hidden"><div style="position:absolute;left:0;top:0;width:0;height:0;border-top:5px solid #808080;border-right:5px solid transparent"></div><div style="position:absolute;left:4px;top:4px;width:9px;height:8px;border:1px solid #d8d8c8;border-top:3px solid #d8d8c8"></div></div>
<div style="position:absolute;left:717px;top:5px;width:19px;height:19px;border:1px solid #e8e8d8;border-radius:4px;background:#ff0000;overflow:hidden"><div style="position:absolute;left:0;top:0;width:0;height:0;border-top:15px solid #808080;border-right:15px solid transparent"></div><svg style="position:absolute;left:0;top:0" width="19" height="19"><path d="M4.5 4.5L15 15M15 4.5L4.5 15" stroke="#fff" stroke-width="2"/></svg></div>
<div style="position:absolute;left:92px;top:54px;width:633px;height:1px;background:#808080"></div>
<div style="position:absolute;left:14px;top:38px;width:1px;height:403px;background:#808080"></div>
<div style="position:absolute;left:724px;top:54px;width:1px;height:387px;background:#808080"></div>
<div style="position:absolute;left:725px;top:55px;width:2px;height:388px;background:#c0c0c0"></div>
<div style="position:absolute;left:14px;top:440px;width:711px;height:1px;background:#808080"></div>
<div style="position:absolute;left:15px;top:441px;width:712px;height:2px;background:#c0c0c0"></div>
<div style="position:absolute;left:14px;top:35px;width:79px;height:3px;background:#ffff00;border-radius:3px 3px 0 0;border:1px solid #808000;border-bottom:none;box-sizing:border-box"></div>
<div style="position:absolute;left:92px;top:38px;width:1px;height:17px;background:#808080"></div>
<div style="position:absolute;top:38.79px;font-size:12px;line-height:12.00px;color:#000;white-space:pre;word-spacing:1.60px;transform:scaleX(0.9608);transform-origin:0 0;left:21.48px;">Disc Quality</div>
<div style="position:absolute;top:171.79px;font-size:12px;line-height:12.00px;color:#000;white-space:pre;transform:scaleX(0.9294);transform-origin:0 0;left:43.10px;">10</div>
<div style="position:absolute;top:145.79px;font-size:12px;line-height:12.00px;color:#000;white-space:pre;transform:scaleX(0.9294);transform-origin:0 0;left:43.10px;">20</div>
<div style="position:absolute;top:119.79px;font-size:12px;line-height:12.00px;color:#000;white-space:pre;transform:scaleX(0.9294);transform-origin:0 0;left:43.10px;">30</div>
<div style="position:absolute;top:93.79px;font-size:12px;line-height:12.00px;color:#000;white-space:pre;transform:scaleX(0.9294);transform-origin:0 0;left:43.10px;">40</div>
<div style="position:absolute;top:66.79px;font-size:12px;line-height:12.00px;color:#000;white-space:pre;transform:scaleX(0.9294);transform-origin:0 0;left:43.10px;">50</div>
<div style="position:absolute;top:182.79px;font-size:12px;line-height:12.00px;color:#000;white-space:pre;transform:scaleX(0.9655);transform-origin:0 0;left:532.78px;">2</div>
<div style="position:absolute;top:165.79px;font-size:12px;line-height:12.00px;color:#000;white-space:pre;transform:scaleX(0.9655);transform-origin:0 0;left:532.78px;">4</div>
<div style="position:absolute;top:149.79px;font-size:12px;line-height:12.00px;color:#000;white-space:pre;transform:scaleX(0.9655);transform-origin:0 0;left:532.78px;">6</div>
<div style="position:absolute;top:132.79px;font-size:12px;line-height:12.00px;color:#000;white-space:pre;transform:scaleX(0.9655);transform-origin:0 0;left:532.78px;">8</div>
<div style="position:absolute;top:116.79px;font-size:12px;line-height:12.00px;color:#000;white-space:pre;transform:scaleX(0.9294);transform-origin:0 0;left:532.80px;">10</div>
<div style="position:absolute;top:100.79px;font-size:12px;line-height:12.00px;color:#000;white-space:pre;transform:scaleX(0.9294);transform-origin:0 0;left:532.80px;">12</div>
<div style="position:absolute;top:83.79px;font-size:12px;line-height:12.00px;color:#000;white-space:pre;transform:scaleX(0.9294);transform-origin:0 0;left:532.80px;">14</div>
<div style="position:absolute;top:66.79px;font-size:12px;line-height:12.00px;color:#000;white-space:pre;transform:scaleX(0.9294);transform-origin:0 0;left:532.80px;">16</div>
<div style="position:absolute;top:206.79px;font-size:12px;line-height:12.00px;color:#000;white-space:pre;transform:scaleX(0.8462);transform-origin:0 0;left:56.34px;">0.0</div>
<div style="position:absolute;top:356.79px;font-size:12px;line-height:12.00px;color:#000;white-space:pre;transform:scaleX(0.8462);transform-origin:0 0;left:56.34px;">0.0</div>
<div style="position:absolute;top:206.79px;font-size:12px;line-height:12.00px;color:#000;white-space:pre;transform:scaleX(0.8462);transform-origin:0 0;left:108.24px;">0.5</div>
<div style="position:absolute;top:356.79px;font-size:12px;line-height:12.00px;color:#000;white-space:pre;transform:scaleX(0.8462);transform-origin:0 0;left:108.24px;">0.5</div>
<div style="position:absolute;top:206.79px;font-size:12px;line-height:12.00px;color:#000;white-space:pre;transform:scaleX(0.8462);transform-origin:0 0;left:160.14px;">1.0</div>
<div style="position:absolute;top:356.79px;font-size:12px;line-height:12.00px;color:#000;white-space:pre;transform:scaleX(0.8462);transform-origin:0 0;left:160.14px;">1.0</div>
<div style="position:absolute;top:206.79px;font-size:12px;line-height:12.00px;color:#000;white-space:pre;transform:scaleX(0.8462);transform-origin:0 0;left:212.04px;">1.5</div>
<div style="position:absolute;top:356.79px;font-size:12px;line-height:12.00px;color:#000;white-space:pre;transform:scaleX(0.8462);transform-origin:0 0;left:212.04px;">1.5</div>
<div style="position:absolute;top:206.79px;font-size:12px;line-height:12.00px;color:#000;white-space:pre;transform:scaleX(0.8462);transform-origin:0 0;left:263.94px;">2.0</div>
<div style="position:absolute;top:356.79px;font-size:12px;line-height:12.00px;color:#000;white-space:pre;transform:scaleX(0.8462);transform-origin:0 0;left:263.94px;">2.0</div>
<div style="position:absolute;top:206.79px;font-size:12px;line-height:12.00px;color:#000;white-space:pre;transform:scaleX(0.8462);transform-origin:0 0;left:315.84px;">2.5</div>
<div style="position:absolute;top:356.79px;font-size:12px;line-height:12.00px;color:#000;white-space:pre;transform:scaleX(0.8462);transform-origin:0 0;left:315.84px;">2.5</div>
<div style="position:absolute;top:206.79px;font-size:12px;line-height:12.00px;color:#000;white-space:pre;transform:scaleX(0.8462);transform-origin:0 0;left:367.74px;">3.0</div>
<div style="position:absolute;top:356.79px;font-size:12px;line-height:12.00px;color:#000;white-space:pre;transform:scaleX(0.8462);transform-origin:0 0;left:367.74px;">3.0</div>
<div style="position:absolute;top:206.79px;font-size:12px;line-height:12.00px;color:#000;white-space:pre;transform:scaleX(0.8462);transform-origin:0 0;left:419.64px;">3.5</div>
<div style="position:absolute;top:356.79px;font-size:12px;line-height:12.00px;color:#000;white-space:pre;transform:scaleX(0.8462);transform-origin:0 0;left:419.64px;">3.5</div>
<div style="position:absolute;top:206.79px;font-size:12px;line-height:12.00px;color:#000;white-space:pre;transform:scaleX(0.8462);transform-origin:0 0;left:471.54px;">4.0</div>
<div style="position:absolute;top:356.79px;font-size:12px;line-height:12.00px;color:#000;white-space:pre;transform:scaleX(0.8462);transform-origin:0 0;left:471.54px;">4.0</div>
<div style="position:absolute;top:206.79px;font-size:12px;line-height:12.00px;color:#000;white-space:pre;transform:scaleX(0.8462);transform-origin:0 0;left:523.44px;">4.5</div>
<div style="position:absolute;top:356.79px;font-size:12px;line-height:12.00px;color:#000;white-space:pre;transform:scaleX(0.8462);transform-origin:0 0;left:523.44px;">4.5</div>
<div style="position:absolute;top:321.79px;font-size:12px;line-height:12.00px;color:#000;white-space:pre;transform:scaleX(0.9655);transform-origin:0 0;left:49.08px;">2</div>
<div style="position:absolute;top:295.79px;font-size:12px;line-height:12.00px;color:#000;white-space:pre;transform:scaleX(0.9655);transform-origin:0 0;left:49.08px;">4</div>
<div style="position:absolute;top:269.79px;font-size:12px;line-height:12.00px;color:#000;white-space:pre;transform:scaleX(0.9655);transform-origin:0 0;left:49.08px;">6</div>
<div style="position:absolute;top:243.79px;font-size:12px;line-height:12.00px;color:#000;white-space:pre;transform:scaleX(0.9655);transform-origin:0 0;left:49.08px;">8</div>
<div style="position:absolute;top:216.79px;font-size:12px;line-height:12.00px;color:#000;white-space:pre;transform:scaleX(0.9294);transform-origin:0 0;left:43.10px;">10</div>
<div style="position:absolute;top:321.79px;font-size:12px;line-height:12.00px;color:#000;white-space:pre;transform:scaleX(0.9655);transform-origin:0 0;left:532.78px;">4</div>
<div style="position:absolute;top:295.79px;font-size:12px;line-height:12.00px;color:#000;white-space:pre;transform:scaleX(0.9655);transform-origin:0 0;left:532.78px;">8</div>
<div style="position:absolute;top:269.79px;font-size:12px;line-height:12.00px;color:#000;white-space:pre;transform:scaleX(0.9294);transform-origin:0 0;left:532.80px;">12</div>
<div style="position:absolute;top:243.79px;font-size:12px;line-height:12.00px;color:#000;white-space:pre;transform:scaleX(0.9294);transform-origin:0 0;left:532.80px;">16</div>
<div style="position:absolute;top:216.79px;font-size:12px;line-height:12.00px;color:#000;white-space:pre;transform:scaleX(0.9294);transform-origin:0 0;left:532.80px;">20</div>
<div style="position:absolute;left:18px;top:374px;width:170px;height:63px;border:1px solid #c0c0c0;border-radius:0px;box-sizing:border-box;"></div>
<div style="position:absolute;left:27px;top:374px;width:63px;height:1px;background:#fff"></div>
<div style="position:absolute;left:28px;top:371px;width:8px;height:8px;background:#00ffff;border:1px solid #200000;box-sizing:border-box"></div>
<div style="position:absolute;top:367.79px;font-size:12px;line-height:12.00px;color:#000;white-space:pre;word-spacing:1.60px;transform:scaleX(0.8985);transform-origin:0 0;left:40.51px;">PI Errors</div>
<div style="position:absolute;top:382.79px;font-size:12px;line-height:12.00px;color:#000080;white-space:pre;transform:scaleX(0.9267);transform-origin:0 0;left:149.00px;">11.45</div>
<div style="position:absolute;top:400.79px;font-size:12px;line-height:12.00px;color:#000080;white-space:pre;transform:scaleX(0.8968);transform-origin:0 0;left:164.02px;">42</div>
<div style="position:absolute;top:418.79px;font-size:12px;line-height:12.00px;color:#000080;white-space:pre;transform:scaleX(0.8984);transform-origin:0 0;left:140.01px;">142444</div>
<div style="position:absolute;left:198px;top:374px;width:170px;height:63px;border:1px solid #c0c0c0;border-radius:0px;box-sizing:border-box;"></div>
<div style="position:absolute;left:207px;top:374px;width:73px;height:1px;background:#fff"></div>
<div style="position:absolute;left:208px;top:371px;width:8px;height:8px;background:#ffff00;border:1px solid #200000;box-sizing:border-box"></div>
<div style="position:absolute;top:367.79px;font-size:12px;line-height:12.00px;color:#000;white-space:pre;word-spacing:1.60px;transform:scaleX(0.9159);transform-origin:0 0;left:220.51px;">PI Failures</div>
<div style="position:absolute;top:382.79px;font-size:12px;line-height:12.00px;color:#000080;white-space:pre;transform:scaleX(0.8979);transform-origin:0 0;left:337.02px;">0.03</div>
<div style="position:absolute;top:400.79px;font-size:12px;line-height:12.00px;color:#000080;white-space:pre;transform:scaleX(0.8940);transform-origin:0 0;left:352.02px;">4</div>
<div style="position:absolute;top:418.79px;font-size:12px;line-height:12.00px;color:#000080;white-space:pre;transform:scaleX(0.8976);transform-origin:0 0;left:340.02px;">406</div>
<div style="position:absolute;left:379px;top:374px;width:170px;height:46px;border:1px solid #c0c0c0;border-radius:0px;box-sizing:border-box;"></div>
<div style="position:absolute;left:388px;top:374px;width:42px;height:1px;background:#fff"></div>
<div style="position:absolute;left:389px;top:371px;width:8px;height:8px;background:#ff00ff;border:1px solid #200000;box-sizing:border-box"></div>
<div style="position:absolute;top:367.79px;font-size:12px;line-height:12.00px;color:#000;white-space:pre;letter-spacing:0.216px;left:401.46px;">Jitter</div>
<div style="position:absolute;top:382.79px;font-size:12px;line-height:12.00px;color:#000080;white-space:pre;transform:scaleX(0.8821);transform-origin:0 0;left:506.02px;">8.97 %</div>
<div style="position:absolute;top:400.79px;font-size:12px;line-height:12.00px;color:#000080;white-space:pre;transform:scaleX(0.8821);transform-origin:0 0;left:506.02px;">10.1 %</div>
<div style="position:absolute;top:423.79px;font-size:12px;line-height:12.00px;color:#000;white-space:pre;word-spacing:1.60px;transform:scaleX(0.9077);transform-origin:0 0;left:388.51px;">PO Failures:</div>
<div style="position:absolute;top:423.79px;font-size:12px;line-height:12.00px;color:#000080;white-space:pre;transform:scaleX(0.8940);transform-origin:0 0;left:532.02px;">0</div>
<div style="position:absolute;left:562px;top:59px;width:68px;height:19px;border:1px solid #000080;border-radius:3px;box-sizing:border-box;background:#fff;box-shadow:inset -1px -2px 0 #d0d0c8"></div>
<div style="position:absolute;left:654px;top:59px;width:68px;height:19px;border:1px solid #000080;border-radius:3px;box-sizing:border-box;background:#fff;box-shadow:inset -1px -2px 0 #d0d0c8"></div>
<div style="position:absolute;left:655px;top:60px;width:66px;height:17px;border:1px dotted #a00000;border-color:#a00000 #b08000 #c0c000 #b08000;box-sizing:border-box;border-radius:2px"></div>
<div style="position:absolute;left:697px;top:73px;width:6px;height:1px;background:#000"></div>
<div style="position:absolute;left:561px;top:92px;width:161px;height:75px;border:1px solid #c0c0c0;border-radius:3px;box-sizing:border-box;border-right:none;border-radius:3px 0 0 3px;"></div>
<div style="position:absolute;left:722px;top:93px;width:1px;height:1px;background:#c0c0c0"></div>
<div style="position:absolute;left:723px;top:94px;width:1px;height:1px;background:#c0c0c0"></div>
<div style="position:absolute;left:722px;top:165px;width:1px;height:1px;background:#c0c0c0"></div>
<div style="position:absolute;left:723px;top:164px;width:1px;height:1px;background:#c0c0c0"></div>
<div style="position:absolute;left:567px;top:92px;width:63px;height:1px;background:#fff"></div>
<div style="position:absolute;top:100.79px;font-size:12px;line-height:12.00px;color:#000080;white-space:pre;transform:scaleX(0.9471);transform-origin:0 0;left:616.99px;">DVD–R</div>
<div style="position:absolute;top:115.79px;font-size:12px;line-height:12.00px;color:#000;white-space:pre;transform:scaleX(0.9191);transform-origin:0 0;left:568.00px;">ID:</div>
<div style="position:absolute;top:115.79px;font-size:12px;line-height:12.00px;color:#000080;white-space:pre;word-spacing:1.60px;transform:scaleX(0.9028);transform-origin:0 0;left:617.01px;">MCC 02RG20</div>
<div style="position:absolute;top:130.79px;font-size:12px;line-height:12.00px;color:#000080;white-space:pre;word-spacing:1.60px;transform:scaleX(0.8975);transform-origin:0 0;left:617.02px;">17 December 2004</div>
<div style="position:absolute;top:145.79px;font-size:12px;line-height:12.00px;color:#000;white-space:pre;transform:scaleX(0.8478);transform-origin:0 0;left:569.04px;">Label:</div>
<div style="position:absolute;top:145.79px;font-size:12px;line-height:12.00px;color:#000080;white-space:pre;transform:scaleX(0.9478);transform-origin:0 0;left:652.49px;">Data</div>
<div style="position:absolute;left:561px;top:173px;width:161px;height:167px;border:1px solid #c0c0c0;border-radius:3px;box-sizing:border-box;border-right:none;border-radius:3px 0 0 3px;"></div>
<div style="position:absolute;left:722px;top:174px;width:1px;height:1px;background:#c0c0c0"></div>
<div style="position:absolute;left:723px;top:175px;width:1px;height:1px;background:#c0c0c0"></div>
<div style="position:absolute;left:722px;top:338px;width:1px;height:1px;background:#c0c0c0"></div>
<div style="position:absolute;left:723px;top:337px;width:1px;height:1px;background:#c0c0c0"></div>
<div style="position:absolute;left:568px;top:173px;width:46px;height:1px;background:#fff"></div>
<div style="position:absolute;top:166.79px;font-size:12px;line-height:12.00px;color:#0000ff;white-space:pre;transform:scaleX(0.9816);transform-origin:0 0;left:569.47px;">Settings</div>
<div style="position:absolute;left:631px;top:185px;width:82px;height:20px;border:1px solid #808080;box-sizing:border-box;background:#fff"></div>
<div style="position:absolute;left:696px;top:187px;width:15px;height:16px;background:#c0c0c0;border-radius:2px"></div>
<svg style="position:absolute;left:699px;top:191px" width="9" height="7"><path d="M1 1.5l3.5 3.5l3.5-3.5" fill="none" stroke="#fff" stroke-width="2"/></svg>
<div style="position:absolute;left:631px;top:209px;width:70px;height:18px;border:1px solid #808080;box-sizing:border-box;background:#fff"></div>
<div style="position:absolute;top:212.79px;font-size:12px;line-height:12.00px;color:#000;white-space:pre;word-spacing:1.60px;transform:scaleX(0.9167);transform-origin:0 0;left:634.01px;">0000 MB</div>
<div style="position:absolute;left:631px;top:232px;width:70px;height:18px;border:1px solid #808080;box-sizing:border-box;background:#fff"></div>
<div style="position:absolute;top:235.79px;font-size:12px;line-height:12.00px;color:#000;white-space:pre;word-spacing:1.60px;transform:scaleX(0.9167);transform-origin:0 0;left:634.01px;">4451 MB</div>
<div style="position:absolute;left:569px;top:255px;width:13px;height:13px;border:1px solid #008080;box-sizing:border-box;background:#fff"></div>
<div style="position:absolute;left:570px;top:256px;width:0;height:0;border-top:5px solid #c0c0c0;border-right:5px solid transparent"></div>
<svg style="position:absolute;left:569px;top:255px" width="13" height="13"><path d="M3 6l2.5 2.5l4.5-4.5" fill="none" stroke="#008000" stroke-width="2"/></svg>
<div style="position:absolute;top:255.79px;font-size:12px;line-height:12.00px;color:#000;white-space:pre;word-spacing:1.60px;transform:scaleX(0.9251);transform-origin:0 0;left:584.50px;">Show C1/PIE</div>
<div style="position:absolute;left:569px;top:272px;width:13px;height:13px;border:1px solid #008080;box-sizing:border-box;background:#fff"></div>
<div style="position:absolute;left:570px;top:273px;width:0;height:0;border-top:5px solid #c0c0c0;border-right:5px solid transparent"></div>
<svg style="position:absolute;left:569px;top:272px" width="13" height="13"><path d="M3 6l2.5 2.5l4.5-4.5" fill="none" stroke="#008000" stroke-width="2"/></svg>
<div style="position:absolute;top:272.79px;font-size:12px;line-height:12.00px;color:#000;white-space:pre;word-spacing:1.60px;transform:scaleX(0.9338);transform-origin:0 0;left:584.50px;">Show C2/PIF</div>
<div style="position:absolute;left:569px;top:288px;width:13px;height:13px;border:1px solid #008080;box-sizing:border-box;background:#fff"></div>
<div style="position:absolute;left:570px;top:289px;width:0;height:0;border-top:5px solid #c0c0c0;border-right:5px solid transparent"></div>
<svg style="position:absolute;left:569px;top:288px" width="13" height="13"><path d="M3 6l2.5 2.5l4.5-4.5" fill="none" stroke="#008000" stroke-width="2"/></svg>
<div style="position:absolute;top:288.79px;font-size:12px;line-height:12.00px;color:#000;white-space:pre;word-spacing:1.60px;transform:scaleX(0.9520);transform-origin:0 0;left:584.49px;">Show Jitter</div>
<div style="position:absolute;left:569px;top:305px;width:13px;height:13px;border:1px solid #008080;box-sizing:border-box;background:#fff"></div>
<div style="position:absolute;left:570px;top:306px;width:0;height:0;border-top:5px solid #c0c0c0;border-right:5px solid transparent"></div>
<svg style="position:absolute;left:569px;top:305px" width="13" height="13"><path d="M3 6l2.5 2.5l4.5-4.5" fill="none" stroke="#008000" stroke-width="2"/></svg>
<div style="position:absolute;top:305.79px;font-size:12px;line-height:12.00px;color:#000;white-space:pre;word-spacing:1.60px;transform:scaleX(0.8905);transform-origin:0 0;left:584.52px;">Show Read Speed</div>
<div style="position:absolute;left:569px;top:321px;width:13px;height:13px;border:1px solid #c0c0c0;box-sizing:border-box;background:#fff"></div>
<svg style="position:absolute;left:569px;top:321px" width="13" height="13"><path d="M3 6l2.5 2.5l4.5-4.5" fill="none" stroke="#c4c4c4" stroke-width="2"/></svg>
<div style="position:absolute;top:321.79px;font-size:12px;line-height:12.00px;color:#a8a8a8;white-space:pre;word-spacing:1.60px;transform:scaleX(0.8985);transform-origin:0 0;left:584.51px;">Show Write Speed</div>
<div style="position:absolute;left:561px;top:344px;width:161px;height:24px;border:1px solid #c0c0c0;border-radius:3px;box-sizing:border-box;border-right:none;border-radius:3px 0 0 3px;"></div>
<div style="position:absolute;left:722px;top:345px;width:1px;height:1px;background:#c0c0c0"></div>
<div style="position:absolute;left:723px;top:346px;width:1px;height:1px;background:#c0c0c0"></div>
<div style="position:absolute;left:722px;top:366px;width:1px;height:1px;background:#c0c0c0"></div>
<div style="position:absolute;left:723px;top:365px;width:1px;height:1px;background:#c0c0c0"></div>
<div style="position:absolute;top:349.79px;font-size:12px;line-height:12.00px;color:#000080;white-space:pre;transform:scaleX(0.8968);transform-origin:0 0;left:695.02px;">98</div>
<div style="position:absolute;left:561px;top:374px;width:161px;height:63px;border:1px solid #c0c0c0;border-radius:3px;box-sizing:border-box;border-right:none;border-radius:3px 0 0 3px;"></div>
<div style="position:absolute;left:722px;top:375px;width:1px;height:1px;background:#c0c0c0"></div>
<div style="position:absolute;left:723px;top:376px;width:1px;height:1px;background:#c0c0c0"></div>
<div style="position:absolute;left:722px;top:435px;width:1px;height:1px;background:#c0c0c0"></div>
<div style="position:absolute;left:723px;top:434px;width:1px;height:1px;background:#c0c0c0"></div>
<div style="position:absolute;top:381.79px;font-size:12px;line-height:12.00px;color:#000080;white-space:pre;transform:scaleX(0.8803);transform-origin:0 0;left:677.52px;">100 %</div>
<div style="position:absolute;top:400.79px;font-size:12px;line-height:12.00px;color:#000080;white-space:pre;transform:scaleX(0.9372);transform-origin:0 0;left:662.49px;">4450 MB</div>
<div style="position:absolute;top:419.79px;font-size:12px;line-height:12.00px;color:#000080;white-space:pre;transform:scaleX(0.9223);transform-origin:0 0;left:675.50px;">8.31 X</div>
<svg style="position:absolute;left:0;top:0" width="743" height="449" font-family="&quot;Liberation Sans&quot;, &quot;Noto Sans CJK JP&quot;, sans-serif" font-size="12" shape-rendering="auto"><text x="27" y="392.6" fill="#000" textLength="25.3" lengthAdjust="spacingAndGlyphs">平均:</text><text x="27" y="410.6" fill="#000" textLength="25.3" lengthAdjust="spacingAndGlyphs">最大:</text><text x="27" y="428.6" fill="#000" textLength="28.8" lengthAdjust="spacingAndGlyphs">合計 :</text><text x="209" y="392.6" fill="#000" textLength="25.3" lengthAdjust="spacingAndGlyphs">平均:</text><text x="209" y="410.6" fill="#000" textLength="25.3" lengthAdjust="spacingAndGlyphs">最大:</text><text x="209" y="428.6" fill="#000" textLength="28.8" lengthAdjust="spacingAndGlyphs">合計 :</text><text x="389" y="392.6" fill="#000" textLength="25.3" lengthAdjust="spacingAndGlyphs">平均:</text><text x="389" y="410.6" fill="#000" textLength="25.3" lengthAdjust="spacingAndGlyphs">最大:</text><text x="583.5" y="72" fill="#000" textLength="23.5" lengthAdjust="spacingAndGlyphs">開始</text><text x="667.5" y="72" fill="#000" textLength="24.5" lengthAdjust="spacingAndGlyphs">終了</text><text x="693" y="72" fill="#000" textLength="13" lengthAdjust="spacingAndGlyphs">(X)</text><text x="570" y="96" fill="#0000ff" textLength="57.7" lengthAdjust="spacingAndGlyphs">ディスク情報</text><text x="569" y="111.6" fill="#000" textLength="27.1" lengthAdjust="spacingAndGlyphs">タイプ:</text><text x="569" y="141.6" fill="#000" textLength="25.3" lengthAdjust="spacingAndGlyphs">日付:</text><text x="617" y="156.6" fill="#000080" textLength="35" lengthAdjust="spacingAndGlyphs">ﾅI･ﾆｹﾈ(</text><text x="569" y="198.6" fill="#000" textLength="47.3" lengthAdjust="spacingAndGlyphs">転送速度</text><text x="635" y="198.8" fill="#000" textLength="24" lengthAdjust="spacingAndGlyphs">最大</text><text x="569" y="224" fill="#000" textLength="23.3" lengthAdjust="spacingAndGlyphs">開始</text><text x="569" y="246" fill="#000" textLength="47.3" lengthAdjust="spacingAndGlyphs">終了位置</text><text x="569" y="360.6" fill="#000" textLength="50.8" lengthAdjust="spacingAndGlyphs">品質スコア:</text><text x="569" y="392.6" fill="#000" textLength="48.8" lengthAdjust="spacingAndGlyphs">進行状況:</text><text x="569" y="411" fill="#000" textLength="46.2" lengthAdjust="spacingAndGlyphs">ポジション:</text><text x="569" y="429.6" fill="#000" textLength="25.3" lengthAdjust="spacingAndGlyphs">速度:</text></svg>
</body></html>
